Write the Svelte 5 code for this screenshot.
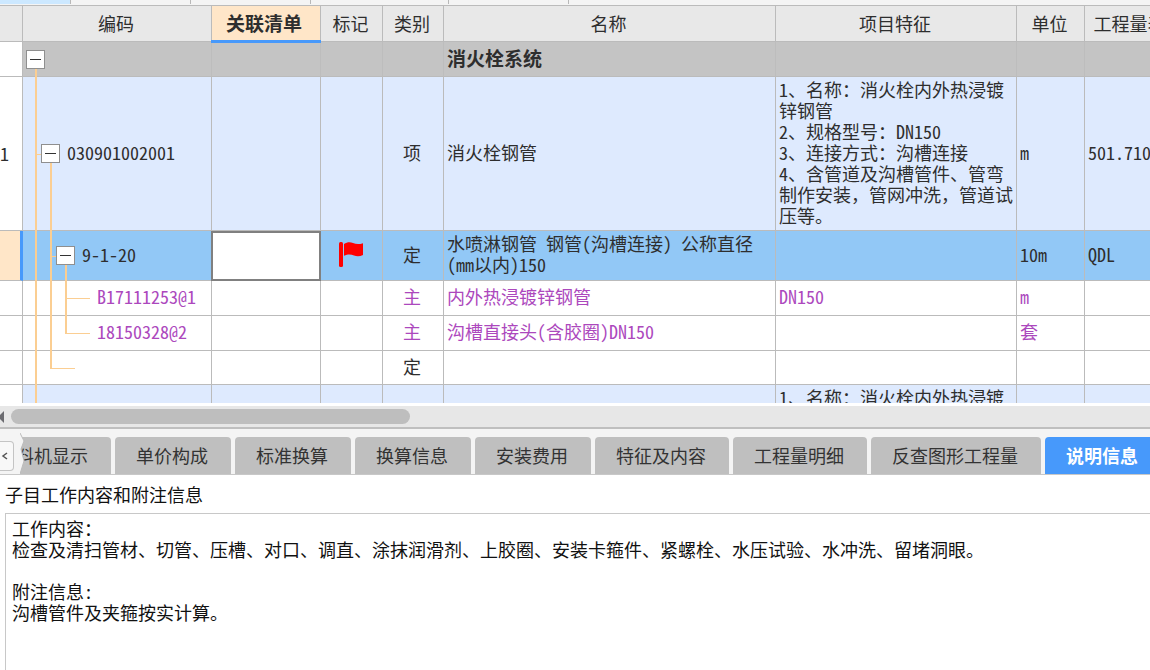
<script>
  const columns = [
    { key: "no", title: "", width: 23 },
    { key: "code", title: "编码", width: 189 },
    { key: "link", title: "关联清单", width: 109, current: true },
    { key: "mark", title: "标记", width: 62 },
    { key: "kind", title: "类别", width: 61 },
    { key: "name", title: "名称", width: 332 },
    { key: "feature", title: "项目特征", width: 241 },
    { key: "unit", title: "单位", width: 68 },
    { key: "qty", title: "工程量表达式", width: 128 },
  ];

  const feature = [
    "1、名称：消火栓内外热浸镀锌钢管",
    "2、规格型号：DN150",
    "3、连接方式：沟槽连接",
    "4、含管道及沟槽管件、管弯制作安装，管网冲洗，管道试压等。",
  ].join("\n");

  // guides: one entry for each tree level left of the node
  const rows = [
    { type: "group", guides: [], toggle: true, name: "消火栓系统" },
    { type: "item", no: "1", guides: ["tee"], toggle: true, code: "030901002001", kind: "项", name: "消火栓钢管", feature, unit: "m", qty: "501.710" },
    { type: "selected", guides: ["line", "tee"], toggle: true, code: "9-1-20", flag: true, kind: "定", name: "水喷淋钢管 钢管(沟槽连接) 公称直径(mm以内)150", unit: "10m", qty: "QDL" },
    { type: "material", guides: ["line", "line", "tee"], code: "B17111253@1", kind: "主", name: "内外热浸镀锌钢管", feature: "DN150", unit: "m" },
    { type: "material", guides: ["line", "line", "elbow"], code: "18150328@2", kind: "主", name: "沟槽直接头(含胶圈)DN150", unit: "套" },
    { type: "empty", guides: ["line", "elbow"], kind: "定" },
    { type: "item", guides: ["line"], feature },
  ];

  const tabs = ["工料机显示", "单价构成", "标准换算", "换算信息", "安装费用", "特征及内容", "工程量明细", "反查图形工程量", "说明信息"];

  const note = `工作内容：
检查及清扫管材、切管、压槽、对口、调直、涂抹润滑剂、上胶圈、安装卡箍件、紧螺栓、水压试验、水冲洗、留堵洞眼。

附注信息:
沟槽管件及夹箍按实计算。`;

  let linkValue = $state("");
  let activeTab = $state("说明信息");
</script>

<div class="page">
  <section class="upper">
    <div class="top-strip">
      <span class="on"></span><span></span><span></span><span class="wide"></span><span></span>
    </div>

    <div class="grid">
      <table>
        <colgroup>
          {#each columns as col}
            <col style="width: {col.width}px" />
          {/each}
        </colgroup>
        <thead>
          <tr>
            {#each columns as col}
              <th class:current={col.current}>{col.title}</th>
            {/each}
          </tr>
        </thead>
        <tbody>
          {#each rows as row}
            <tr class={row.type}>
              <td class="no">{row.no ?? ""}</td>
              <td class="code">
                <div class="tree">
                  {#each row.guides as guide}
                    <i class="guide {guide}" class:long={!row.toggle}></i>
                  {/each}
                  <span class="node">
                    {#if row.toggle}
                      <button class="toggle" aria-label="折叠"></button>
                    {/if}
                  </span>
                  <span class="code-text">{row.code ?? ""}</span>
                </div>
              </td>
              <td class="link">
                {#if row.type === "selected"}
                  <input aria-label="关联清单" bind:value={linkValue} />
                {/if}
              </td>
              <td class="center">
                {#if row.flag}
                  <svg class="flag" width="24" height="25" viewBox="0 0 24 25">
                    <rect x="0" y="0" width="4" height="25" rx="1.500" fill="#f00" />
                    <path d="M5 2C8 0 11-.3 14 1s6 1.500 10 .2V13c-3 1.600-6 1.800-9 .6s-6-1.500-10 .2z" fill="#f00" />
                  </svg>
                {/if}
              </td>
              <td class="center">{row.kind ?? ""}</td>
              <td>{row.name ?? ""}</td>
              <td>{row.feature ?? ""}</td>
              <td>{row.unit ?? ""}</td>
              <td>{row.qty ?? ""}</td>
            </tr>
          {/each}
        </tbody>
      </table>
    </div>

    <div class="scrollbar">
      <button class="arrow" aria-label="向左滚动">
        <svg width="4" height="12" viewBox="0 0 4 12"><path d="M4 0v12L-2 6z" fill="#6b6b70" /></svg>
      </button>
      <div class="track"><div class="thumb"></div></div>
    </div>
  </section>

  <section class="lower">
    <div class="tab-bar">
      <button class="prev" aria-label="上一页">
        <svg width="7" height="8" viewBox="0 0 7 8"><path d="M6 1 2 4l4 3" fill="none" stroke="#555" stroke-width="1.500" /></svg>
      </button>
      <div class="tabs" role="tablist">
        {#each tabs as tab}
          <button
            role="tab"
            class="tab"
            class:active={tab === activeTab}
            aria-selected={tab === activeTab}
            onclick={() => (activeTab = tab)}>{tab}</button
          >
        {/each}
        <svg class="torn" width="5" height="41" viewBox="0 0 5 41">
          <path d="M0 0 4 8 1 16 4 28 0 41z" fill="#f4f4f4" />
          <path d="M0 0 4 8 1 16 4 28 0 41" fill="none" stroke="#bbb" />
        </svg>
      </div>
    </div>
    <label for="note">子目工作内容和附注信息</label>
    <textarea id="note" readonly value={note}></textarea>
  </section>
</div>

<style>
  .page {
    display: flex;
    flex-direction: column;
    height: 100vh;
    overflow: hidden;
    background: #fff;
    color: #2e2e2e;
    font-family: "Noto Sans Mono CJK SC", "Noto Sans CJK SC", monospace;
    font-size: 18px;
    line-height: 21px;
  }
  button,
  input,
  textarea {
    font: inherit;
    padding: 0;
    margin: 0;
    box-sizing: border-box;
  }
  .upper {
    display: flex;
    flex-direction: column;
    flex: 1;
    min-height: 0;
    border-bottom: 2px solid #bfbfbf;
  }

  .top-strip {
    display: flex;
    height: 4px;
    padding-bottom: 1px;
    background: #f4f4f4;
    border-bottom: 1px solid #bbb;
  }
  .top-strip span {
    width: 119px;
    border-right: 1px solid #b8b8b8;
  }
  .top-strip .on {
    width: 70px;
    background: #cce8ff;
  }
  .top-strip .wide {
    width: 137px;
  }

  .grid {
    flex: 1;
    min-height: 0;
    overflow: hidden;
  }
  table {
    table-layout: fixed;
    width: 100%;
    min-width: 1213px;
    border-spacing: 0;
  }
  th,
  td {
    box-sizing: border-box;
    height: 35px;
    padding: 0 2px 3px 3px;
    border-right: 1px solid #bbb;
    border-bottom: 1px solid #bbb;
    text-align: left;
    white-space: pre-wrap;
  }
  th {
    position: relative;
    height: 36px;
    padding: 0 4px 0 2px;
    background: #e8e8e8;
    font-weight: normal;
    text-align: center;
  }
  th.current {
    z-index: 1;
    padding: 0 6px 2px 2px;
    background: #ffe6c8;
    font-size: 19px;
    font-weight: bold;
  }
  th.current::after {
    content: "";
    position: absolute;
    right: -1px;
    bottom: -2px;
    left: -1px;
    height: 3px;
    background: #4799fb;
  }
  td.center {
    padding: 0 4px 3px 2px;
    text-align: center;
  }
  td.no {
    padding: 0;
  }
  td.code {
    padding: 0 0 0 3px;
  }
  td.link {
    position: relative;
  }
  .link input {
    position: absolute;
    top: 0;
    left: -1px;
    width: calc(100% + 2px);
    height: calc(100% + 1px);
    padding: 0 2px;
    border: 2px solid #808080;
    background: #fff;
    outline: none;
  }

  .group td:not(.no) {
    background: #c4c4c4;
    border-right-color: #bdbdbd;
    font-size: 19px;
    font-weight: bold;
  }
  .item td:not(.no) {
    background: #deeafe;
  }
  .item td {
    height: 154px;
  }
  .selected td {
    height: 50px;
    background: #92c8f6;
  }
  .selected .no {
    background: #ffe6c8;
    border-right: 3px solid #4799fb;
  }
  .material td {
    color: #ac48bd;
  }
  .empty td {
    height: 34px;
  }
  .flag {
    display: block;
    margin: 0 auto;
  }

  .tree {
    display: flex;
    align-items: center;
    height: 100%;
  }
  .guide {
    position: relative;
    width: 15px;
    height: 100%;
  }
  .guide::before,
  .guide::after {
    content: "";
    position: absolute;
    left: 9px;
    background: #fbce92;
  }
  .guide::before {
    top: 0;
    bottom: -1px;
    width: 2px;
  }
  .guide.elbow::before {
    bottom: 50%;
  }
  .guide.tee::after,
  .guide.elbow::after {
    top: 50%;
    width: 7px;
    height: 1px;
  }
  .guide.long::after {
    width: 25px;
  }
  .node {
    position: relative;
    display: flex;
    align-items: center;
    width: 19px;
    height: 100%;
    margin-right: 7px;
  }
  .node:has(.toggle)::before {
    content: "";
    position: absolute;
    top: 50%;
    bottom: -1px;
    left: 9px;
    width: 2px;
    background: #fbce92;
  }
  .toggle {
    position: relative;
    width: 19px;
    height: 19px;
    border: 1px solid #8f8f8f;
    background: #fff;
  }
  .toggle::before {
    content: "";
    display: block;
    height: 1px;
    margin: 0 3px;
    background: #333;
  }
  .code-text {
    padding-bottom: 3px;
  }

  .scrollbar {
    display: flex;
    align-items: center;
    height: 21px;
    border-top: 3px solid #fff;
    background: #e7e7e7;
  }
  .arrow {
    display: flex;
    width: 11px;
    border: 0;
    background: none;
  }
  .track {
    flex: 1;
  }
  .thumb {
    width: 35%;
    height: 15px;
    border-radius: 8px;
    background: #bebebe;
  }

  .lower {
    display: flex;
    flex-direction: column;
    height: 241px;
  }
  .tab-bar {
    display: flex;
    align-items: flex-end;
    background: #f4f4f4;
    border-bottom: 1px solid #c8c8c8;
  }
  .prev {
    display: flex;
    align-items: center;
    width: 14px;
    height: 30px;
    margin: 0 6px 3px 0;
    padding-left: 1px;
    border: 1px solid #c4c4c4;
    border-left: 0;
    border-radius: 0 4px 4px 0;
    background: #f8f8f8;
  }
  .tabs {
    position: relative;
    display: flex;
    flex: 1;
    gap: 4px;
    padding-top: 8px;
    overflow: hidden;
  }
  .tab {
    flex: none;
    height: 37px;
    padding: 0 23px 0 21px;
    border: 0;
    border-radius: 4px 4px 0 0;
    background: #bfbfbf;
    color: #333;
  }
  .tab:first-child {
    margin-left: -43px;
  }
  .tab.active {
    background: #4799fb;
    color: #fff;
    font-weight: bold;
  }
  .torn {
    position: absolute;
    bottom: 0;
    left: 0;
  }

  label {
    padding: 9px 5px 8px;
    color: #111;
  }
  textarea {
    flex: 1;
    margin-left: 5px;
    padding: 4px 6px;
    border: 1px solid #c8c8c8;
    border-width: 1px 0 0 1px;
    background: #fff;
    color: #111;
    outline: none;
    overflow: hidden;
    resize: none;
  }
</style>
